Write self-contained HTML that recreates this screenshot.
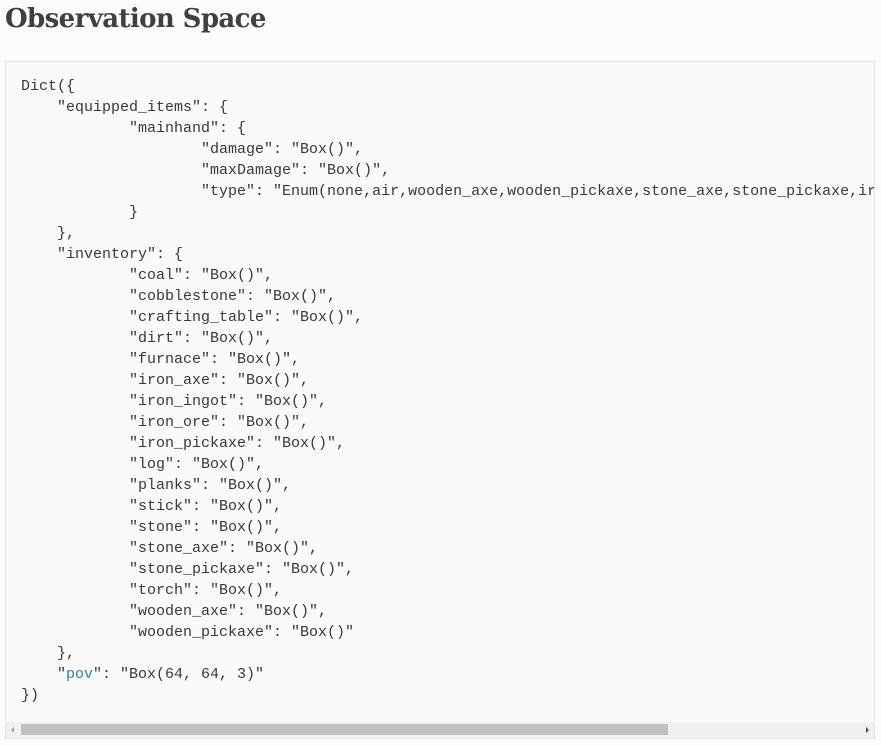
<!DOCTYPE html>
<html><head><style>
body{margin:0;background:#fcfcfc;width:881px;height:745px;overflow:hidden;font-family:"Liberation Sans",sans-serif;color:#404040}
h1{font-family:"DejaVu Serif","Liberation Serif",serif;font-weight:bold;font-size:26px;margin:0;position:absolute;left:5px;top:1px;line-height:36px;color:#404040;letter-spacing:-0.6px}
.box{position:absolute;left:5px;top:61px;width:870px;height:678px;border:1px solid #e1e4e5;background:#fafafa;box-sizing:border-box;overflow:hidden}
pre{margin:0;padding:14px 15px;font-family:"Liberation Mono",monospace;font-size:15px;line-height:21px;color:#383838;white-space:pre;tab-size:8}
.b{color:#2980b9}
.sb{position:absolute;left:0;right:0;top:660px;height:16px;background:#f0f0f0}
.th{position:absolute;left:15px;width:647px;top:2px;height:11px;background:#c1c1c1}
.al{position:absolute;left:5px;top:5px;width:0;height:0;border-top:3px solid transparent;border-bottom:3px solid transparent;border-right:3px solid #a3a3a3}
.ar{position:absolute;right:5px;top:5px;width:0;height:0;border-top:3px solid transparent;border-bottom:3px solid transparent;border-left:3px solid #505050}
</style></head><body>
<h1>Observation Space</h1>
<div class="box"><pre>Dict({
    "equipped_items": {
	    "mainhand": {
		    "damage": "Box()",
		    "maxDamage": "Box()",
		    "type": "Enum(none,air,wooden_axe,wooden_pickaxe,stone_axe,stone_pickaxe,iron_axe,iron_pickaxe,other)"
	    }
    },
    "inventory": {
	    "coal": "Box()",
	    "cobblestone": "Box()",
	    "crafting_table": "Box()",
	    "dirt": "Box()",
	    "furnace": "Box()",
	    "iron_axe": "Box()",
	    "iron_ingot": "Box()",
	    "iron_ore": "Box()",
	    "iron_pickaxe": "Box()",
	    "log": "Box()",
	    "planks": "Box()",
	    "stick": "Box()",
	    "stone": "Box()",
	    "stone_axe": "Box()",
	    "stone_pickaxe": "Box()",
	    "torch": "Box()",
	    "wooden_axe": "Box()",
	    "wooden_pickaxe": "Box()"
    },
    "<span class="b">pov</span>": "Box(64, 64, 3)"
})</pre>
<div class="sb"><div class="al"></div><div class="th"></div><div class="ar"></div></div>
</div>
</body></html>
